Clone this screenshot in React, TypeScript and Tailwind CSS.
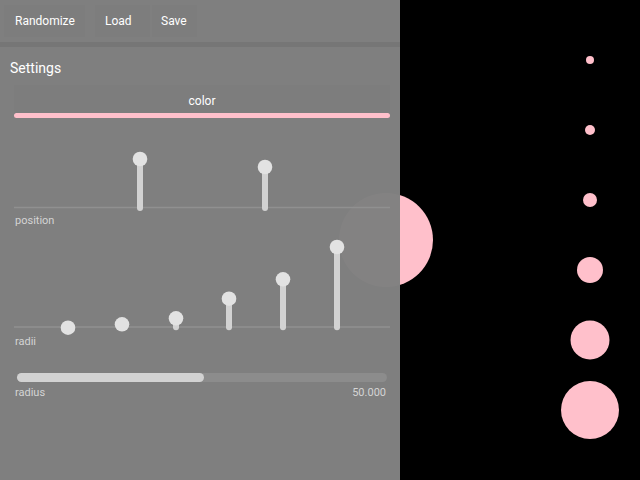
const font = { fontFamily: "Roboto, 'Liberation Sans', sans-serif" }

const dots = [
  { cy: 60, r: 4 },
  { cy: 130, r: 5 },
  { cy: 200, r: 7 },
  { cy: 270, r: 13 },
  { cy: 340, r: 19.5 },
  { cy: 410, r: 29 },
]

const positions = [
  { x: 126, y: 18 },
  { x: 251, y: 26 },
]

const radii = [
  { x: 54, y: 96.7 },
  { x: 108, y: 93.3 },
  { x: 162, y: 87.3 },
  { x: 215, y: 67.7 },
  { x: 269, y: 48.3 },
  { x: 323, y: 16 },
]

function Stems({ items, base, bottom, height }: { items: { x: number; y: number }[]; base: number; bottom: number; height: number }) {
  return (
    <svg width={376} height={height} className="block">
      <line x1={0} x2={376} y1={base} y2={base} stroke="#909090" strokeWidth={1.5} />
      {items.map((s, i) => (
        <g key={i}>
          <line x1={s.x} x2={s.x} y1={s.y} y2={bottom} stroke="#d2d2d2" strokeWidth={6} strokeLinecap="round" />
          <circle cx={s.x} cy={s.y} r={7.3} fill="#e2e2e2" />
        </g>
      ))}
    </svg>
  )
}

export default function App() {
  return (
    <div className="relative w-[640px] h-[480px] bg-black overflow-hidden" style={font}>
      {/* canvas */}
      <svg className="absolute inset-0" width={640} height={480}>
        <circle cx={386} cy={240} r={47} fill="#ffc0cb" />
        {dots.map((d, i) => (
          <circle key={i} cx={590} cy={d.cy} r={d.r} fill="#ffc0cb" />
        ))}
      </svg>

      {/* gui panel */}
      <div className="relative w-[400px] h-[480px] bg-[rgba(129,129,129,0.985)] flex flex-col">
        <div className="h-[42px] flex items-start pt-[5px] pl-[4px] text-[12px] text-white">
          <div className="w-[81px] h-[32px] pl-[11px] flex items-center bg-[#7c7c7c]/60">Randomize</div>
          <div className="ml-[10px] w-[55px] h-[32px] pl-[10px] flex items-center bg-[#7c7c7c]/60">Load</div>
          <div className="ml-[2px] w-[45px] h-[32px] pl-[9px] flex items-center bg-[#7c7c7c]/60">Save</div>
        </div>
        <div className="h-[5px] bg-[#767676]" />

        <div className="mt-[11px] pl-[10px] text-[14px] leading-[20px] text-white">Settings</div>

        <div className="mx-[14px] mt-[7px] w-[376px] bg-[#7c7c7c]/50 flex flex-col">
          <div className="h-[28px] pt-[3px] flex items-center justify-center text-[12px] text-white">color</div>
          <div className="h-[4.5px] rounded-full bg-[#ffc0cb]" />
        </div>

        <div className="mx-[14px] mt-[23px]">
          <Stems items={positions} base={66.5} bottom={67} height={74} />
        </div>
        <div className="pl-[15px] text-[11px] leading-[12px] text-[#d4d4d4]">position</div>

        <div className="mx-[14px] mt-[4px]">
          <Stems items={radii} base={96} bottom={96.3} height={105} />
        </div>
        <div className="pl-[15px] text-[11px] leading-[12px] text-[#d4d4d4]">radii</div>

        <div className="ml-[17px] w-[370px] mt-[25px] h-[9px] rounded-full bg-[#8c8c8c]">
          <div className="h-full w-[187px] rounded-full bg-[#d2d2d2]" />
        </div>
        <div className="mt-[5px] pl-[15px] pr-[14px] flex justify-between text-[11px] leading-[12px] text-[#d4d4d4]">
          <span>radius</span>
          <span>50.000</span>
        </div>
      </div>
    </div>
  )
}
